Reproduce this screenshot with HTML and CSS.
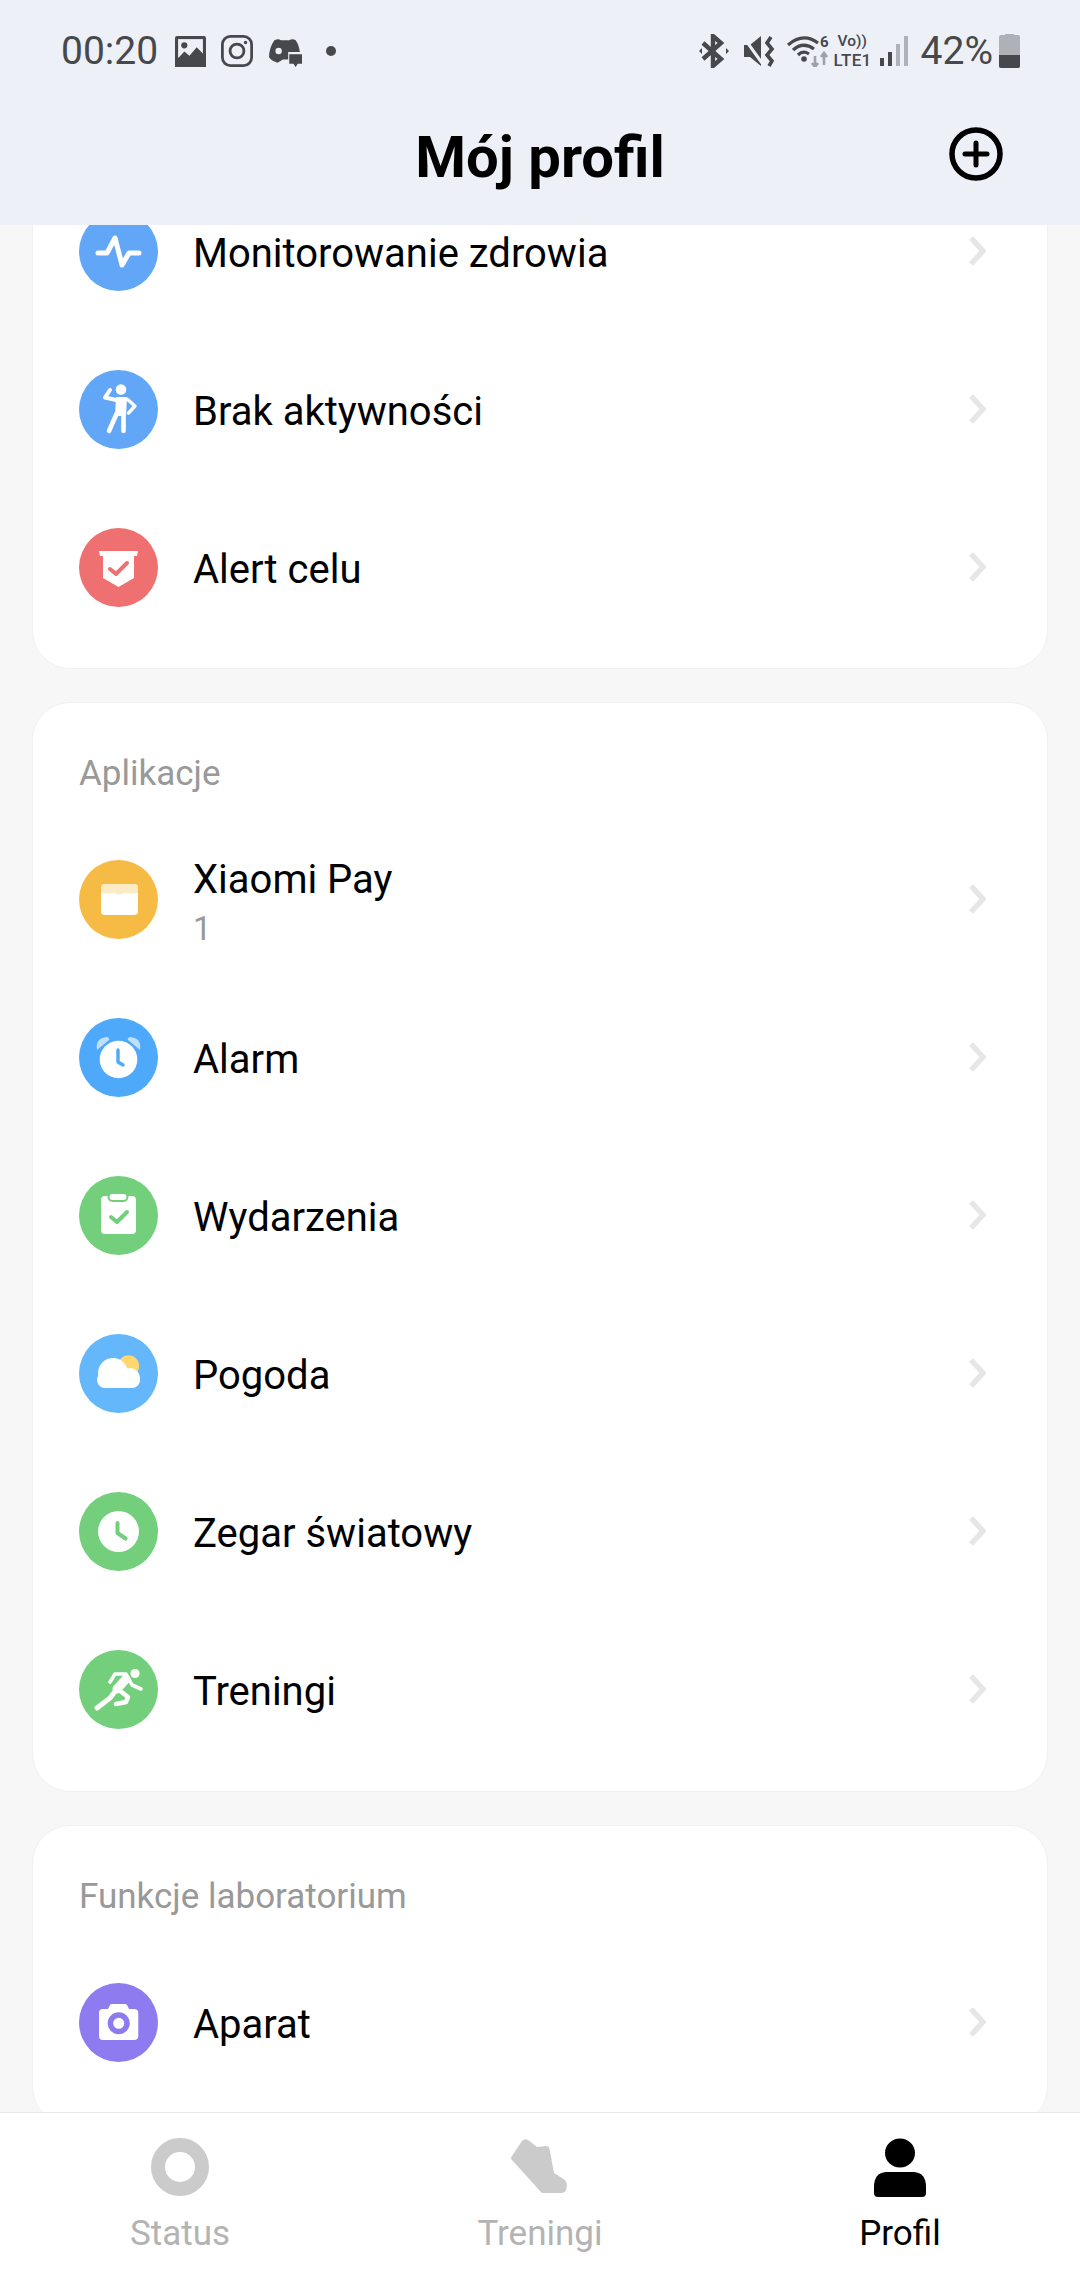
FILE: index.html
```html
<!DOCTYPE html>
<html lang="pl">
<head>
    <meta charset="UTF-8">
    <meta name="viewport" content="width=device-width, initial-scale=1.0">
    <title>Mój profil</title>
    <link rel="stylesheet" href="styles.css">
</head>
<body>
    <header class="top">
        <div class="statusbar">
            <div class="status-left">
                <span class="time">00:20</span>
                <svg class="st-icon" width="31" height="31" viewBox="0 0 30 30"><rect width="30" height="30" rx="2" fill="#46484c"/><rect x="3" y="3" width="24" height="18" fill="#edf0f7"/><circle cx="9" cy="9" r="3" fill="#46484c"/><path d="M0 25 L9 15 L14 19 L21 11 L30 20 V30 H0Z" fill="#46484c"/></svg>
                <svg class="st-icon" width="32" height="32" viewBox="0 0 30 30" fill="none" stroke="#46484c" stroke-width="2.6"><rect x="1.3" y="1.3" width="27.4" height="27.4" rx="7.5"/><circle cx="15" cy="15" r="6.5"/><circle cx="23" cy="7" r="1.6" fill="#46484c" stroke="none"/></svg>
                <svg class="st-icon chat" width="34" height="30" viewBox="0 0 32 28"><path d="M6 3 Q10 1 12 3 H20 Q23 1 26 3 Q29 7 30 14 H19 V21 H14 L9 24 Q4 23 1 19 Q1 10 6 3Z" fill="#46484c"/><circle cx="10" cy="13" r="3" fill="#edf0f7"/><path d="M20 16 H32 V25 H28 L26 28 L24 25 H20Z" fill="#46484c"/></svg>
                <span class="dot"></span>
            </div>
            <div class="status-right">
                <svg class="bt" width="30" height="34" viewBox="0 0 30 34" fill="none" stroke="#46484c" stroke-width="4.4"><path d="M4 9 L22 25 L14 32 V2 L22 9 L4 25"/><path d="M0 17 L3 14 V20Z M30 17 L27 14 V20Z" fill="#46484c" stroke="none"/></svg>
                <svg width="32" height="32" viewBox="0 0 32 32"><path d="M0 10 H6 L17 1 V31 L6 22 H0Z" fill="#46484c"/><path d="M0 3 L18 28" stroke="#edf0f7" stroke-width="3"/><path d="M27 2 L23 8 L28 14 L23 20 L28 26 L25 31" fill="none" stroke="#46484c" stroke-width="3.6"/></svg>
                <div class="wifi">
                    <svg width="42" height="32" viewBox="0 0 42 32" fill="none" stroke="#46484c" stroke-width="3.2"><path d="M1 10 Q16 -3 31 8"/><path d="M6 15 Q16 6 27 14"/><path d="M11 20 Q16 15 22 19"/><circle cx="17" cy="24" r="2.8" fill="#46484c" stroke="none"/><path d="M28 21 V32 M25 28 L28 32 L31 28" stroke="#9ea1a6" stroke-width="2.6"/><path d="M37 30 V18 M34 22 L37 18 L40 22" stroke="#9ea1a6" stroke-width="2.6"/></svg>
                    <span class="wifi-6">6</span>
                </div>
                <div class="volte"><span class="vo">Vo))</span><span class="lte">LTE1</span></div>
                <div class="signal"><i class="b1"></i><i class="b2"></i><i class="b3"></i><i class="b4"></i></div>
                <span class="pct">42%</span>
                <div class="battery"><i class="cap"></i><i class="level"></i></div>
            </div>
        </div>
        <div class="titlebar">
            <h1>Mój profil</h1>
            <svg class="add" width="56" height="56" viewBox="0 0 56 56" fill="none" stroke="#000"><circle cx="28" cy="28" r="24" stroke-width="5.5"/><path d="M28 17 V39 M17 28 H39" stroke-width="5" stroke-linecap="round"/></svg>
        </div>
    </header>

    <main class="scroll">
        <section class="card first">
            <div class="row">
                <svg class="ico" viewBox="0 0 79 79"><circle cx="39.5" cy="39.5" r="39.5" fill="#62a6f7"/><path d="M19 41 H28 L36 26 L43 53 L50 41 H60" fill="none" stroke="#fff" stroke-width="5" stroke-linecap="round" stroke-linejoin="round"/></svg>
                <span class="name">Monitorowanie zdrowia</span>
                <svg class="chev" viewBox="0 0 18 32"><path d="M3 3 L15 16 L3 29" /></svg>
            </div>
            <div class="row">
                <svg class="ico" viewBox="0 0 79 79"><circle cx="39.5" cy="39.5" r="39.5" fill="#62a6f7"/><circle cx="42" cy="19.500" r="5.300" fill="#fff"/><path d="M31 20 L26 27.500 L37 30" fill="none" stroke="#fff" stroke-width="4" stroke-linecap="round" stroke-linejoin="round"/><path d="M48 29 L56 36 L49.500 43" fill="none" stroke="#fff" stroke-width="3.400" stroke-linecap="round" stroke-linejoin="round"/><path d="M37 27 H48 L47 46 H36Z" fill="#fff"/><path d="M37.500 44 L30 61 M44.500 44 V61" fill="none" stroke="#fff" stroke-width="4.600" stroke-linecap="round"/></svg>
                <span class="name">Brak aktywności</span>
                <svg class="chev" viewBox="0 0 18 32"><path d="M3 3 L15 16 L3 29" /></svg>
            </div>
            <div class="row">
                <svg class="ico" viewBox="0 0 79 79"><circle cx="39.5" cy="39.5" r="39.5" fill="#ee7070"/><path d="M20 23 H59 L58 28 H55 V50 L39.5 59 L24 50 V28 H21Z" fill="#fff"/><path d="M31 41 L37 46 L48 35" fill="none" stroke="#ee7070" stroke-width="4" stroke-linecap="round" stroke-linejoin="round"/></svg>
                <span class="name">Alert celu</span>
                <svg class="chev" viewBox="0 0 18 32"><path d="M3 3 L15 16 L3 29" /></svg>
            </div>
        </section>

        <section class="card">
            <h2>Aplikacje</h2>
            <div class="row">
                <svg class="ico" viewBox="0 0 79 79"><circle cx="39.5" cy="39.5" r="39.5" fill="#f6bb45"/><rect x="22" y="24" width="37" height="31" rx="4" fill="#fff"/><path d="M22 33 V28 Q22 24 26 24 H55 Q59 24 59 28 V33 H44 Q40 36 36 33Z" fill="#fdebc6"/></svg>
                <div class="two-lines"><span class="name">Xiaomi Pay</span><span class="sub">1</span></div>
                <svg class="chev" viewBox="0 0 18 32"><path d="M3 3 L15 16 L3 29" /></svg>
            </div>
            <div class="row">
                <svg class="ico" viewBox="0 0 79 79"><circle cx="39.5" cy="39.5" r="39.5" fill="#4ea9fb"/><path d="M18 32 Q16 20 28 19 Q31 20 30 22 Z M61 32 Q63 20 51 19 Q48 20 49 22 Z" fill="#bfe0fc"/><circle cx="39.5" cy="41.5" r="18.8" fill="#fff"/><path d="M39 32 V44 L44 47" fill="none" stroke="#4ea9fb" stroke-width="3.4" stroke-linecap="round" stroke-linejoin="round"/></svg>
                <span class="name">Alarm</span>
                <svg class="chev" viewBox="0 0 18 32"><path d="M3 3 L15 16 L3 29" /></svg>
            </div>
            <div class="row">
                <svg class="ico" viewBox="0 0 79 79"><circle cx="39.5" cy="39.5" r="39.5" fill="#73cf7b"/><rect x="22" y="20" width="35" height="38" rx="4" fill="#fff"/><rect x="29.5" y="17" width="19" height="8" rx="4" fill="#fff" stroke="#73cf7b" stroke-width="2"/><path d="M32 41 L38 46 L48 36" fill="none" stroke="#73cf7b" stroke-width="4" stroke-linecap="round" stroke-linejoin="round"/></svg>
                <span class="name">Wydarzenia</span>
                <svg class="chev" viewBox="0 0 18 32"><path d="M3 3 L15 16 L3 29" /></svg>
            </div>
            <div class="row">
                <svg class="ico" viewBox="0 0 79 79"><circle cx="39.5" cy="39.5" r="39.5" fill="#64b7fb"/><circle cx="49.5" cy="32" r="10.7" fill="#ffd76e"/><circle cx="34" cy="39" r="15" fill="#fff"/><circle cx="51" cy="44" r="10" fill="#fff"/><rect x="18" y="38" width="43" height="16" rx="8" fill="#fff"/></svg>
                <span class="name">Pogoda</span>
                <svg class="chev" viewBox="0 0 18 32"><path d="M3 3 L15 16 L3 29" /></svg>
            </div>
            <div class="row">
                <svg class="ico" viewBox="0 0 79 79"><circle cx="39.5" cy="39.5" r="39.5" fill="#73cf7b"/><circle cx="39.5" cy="39.5" r="20.5" fill="#fff"/><path d="M38.5 31 V41 L46.5 46.5" fill="none" stroke="#73cf7b" stroke-width="4" stroke-linecap="round" stroke-linejoin="round"/></svg>
                <span class="name">Zegar światowy</span>
                <svg class="chev" viewBox="0 0 18 32"><path d="M3 3 L15 16 L3 29" /></svg>
            </div>
            <div class="row">
                <svg class="ico" viewBox="0 0 79 79"><circle cx="39.5" cy="39.5" r="39.5" fill="#73cf7b"/><circle cx="56" cy="23.5" r="4.6" fill="#fff"/><path d="M18 58 L31 48 L38 39" fill="none" stroke="#fff" stroke-width="5" stroke-linecap="round" stroke-linejoin="round"/><path d="M38 39 L47 29" fill="none" stroke="#fff" stroke-width="9" stroke-linecap="round"/><path d="M31 32 L36 24 H47 L53 35 L62 39" fill="none" stroke="#fff" stroke-width="3.6" stroke-linecap="round" stroke-linejoin="round"/><path d="M40 40 L49 47 L47 52 L37 54" fill="none" stroke="#fff" stroke-width="4.6" stroke-linecap="round" stroke-linejoin="round"/></svg>
                <span class="name">Treningi</span>
                <svg class="chev" viewBox="0 0 18 32"><path d="M3 3 L15 16 L3 29" /></svg>
            </div>
        </section>

        <section class="card">
            <h2>Funkcje laboratorium</h2>
            <div class="row">
                <svg class="ico" viewBox="0 0 79 79"><circle cx="39.5" cy="39.5" r="39.5" fill="#8e7bf0"/><path d="M24 26 H29 L31 22 Q31.5 21 33 21 H46 Q47.500 21 48 22 L50 26 H55 Q59.300 26 59.300 30 V53 Q59.300 57 55 57 H24 Q20 57 20 53 V30 Q20 26 24 26Z" fill="#fff"/><circle cx="39.7" cy="40.3" r="8.3" fill="#fff" stroke="#8e7bf0" stroke-width="5.500"/></svg>
                <span class="name">Aparat</span>
                <svg class="chev" viewBox="0 0 18 32"><path d="M3 3 L15 16 L3 29" /></svg>
            </div>
        </section>
    </main>

    <nav class="tabs">
        <div class="tab">
            <svg width="60" height="60" viewBox="0 0 60 60"><circle cx="30" cy="30" r="22" fill="none" stroke="#cbcbcb" stroke-width="14"/></svg>
            <span>Status</span>
        </div>
        <div class="tab">
            <svg width="60" height="60" viewBox="0 0 60 60"><path d="M12 4 Q15 1 18 3 L27 10 L37 9 Q39 9.500 39.500 12 L44 36 L55 43 Q58 47 56 53 Q55 56 51 56 H33 Q31 56 30 54 L2 23 Q0 21 2 19Z" fill="#cbcbcb"/></svg>
            <span>Treningi</span>
        </div>
        <div class="tab active">
            <svg width="60" height="60" viewBox="0 0 60 60"><ellipse cx="30" cy="16" rx="15" ry="14.500" fill="#000"/><path d="M16 35 H44 Q56 36 56 50 V56 Q56 60 52 60 H8 Q4 60 4 56 V50 Q4 36 16 35Z" fill="#000"/></svg>
            <span>Profil</span>
        </div>
    </nav>
</body>
</html>
```

FILE: styles.css
```css
* {
    box-sizing: border-box;
}
html, body {
    margin: 0;
    height: 2280px;
}
body {
    display: flex;
    flex-direction: column;
    font-family: Roboto, sans-serif;
    background-color: #f7f7f7;
    overflow: hidden;
}

/* gorny pasek */
.top {
    flex: 0 0 225px;
    background-color: #edf0f7;
}
.statusbar {
    height: 102px;
    padding: 34px 60px 0 61px;
    display: flex;
    justify-content: space-between;
    align-items: flex-start;
    color: #46484c;
}
.status-left {
    display: flex;
    align-items: center;
    height: 34px;
}
.time {
    font-size: 39px;
    line-height: 34px;
    margin-right: 17px;
}
.st-icon {
    margin-right: 15px;
}
.chat {
    margin-top: 2px;
}
.dot {
    width: 10px;
    height: 10px;
    border-radius: 50%;
    background-color: #46484c;
    margin-left: 9px;
}
.status-right {
    display: flex;
    align-items: center;
    height: 34px;
}
.status-right > svg {
    flex-shrink: 0;
}
.bt {
    margin-right: 15px;
}
.wifi {
    position: relative;
    width: 42px;
    height: 32px;
    margin-left: 11px;
}
.wifi-6 {
    position: absolute;
    top: 0;
    right: 0;
    font-size: 15px;
    line-height: 14px;
    font-weight: 700;
}
.volte {
    display: flex;
    flex-direction: column;
    flex-shrink: 0;
    margin-left: 5px;
    width: 39px;
    font-weight: 500;
}
.vo {
    font-size: 15.5px;
    line-height: 18px;
    padding-left: 4px;
}
.lte {
    font-size: 17px;
    line-height: 20px;
    letter-spacing: 0.3px;
}
.signal {
    display: flex;
    align-items: flex-end;
    gap: 4px;
    height: 30px;
    margin-left: 7px;
}
.signal i {
    display: block;
    width: 4px;
    background-color: #46484c;
}
.signal .b1 { height: 8px; }
.signal .b2 { height: 14px; }
.signal .b3 { height: 22px; background-color: #aeb1b6; }
.signal .b4 { height: 30px; background-color: #aeb1b6; }
.pct {
    font-size: 39px;
    line-height: 34px;
    margin-left: 13px;
    margin-right: 6px;
}
.battery {
    width: 21px;
    height: 33px;
    display: flex;
    flex-direction: column;
    background-color: #aeb1b6;
    border-radius: 2px;
    position: relative;
}
.battery .cap {
    position: absolute;
    top: -1px;
    left: 6px;
    width: 9px;
    height: 5px;
    background-color: #aeb1b6;
}
.battery .level {
    margin-top: auto;
    height: 13px;
    background-color: #46484c;
    border-radius: 0 0 2px 2px;
}

.titlebar {
    display: grid;
    grid-template-columns: 1fr auto 1fr;
    align-items: center;
    height: 110px;
}
h1 {
    grid-column: 2;
    margin: 0;
    font-size: 58px;
    line-height: 110px;
    font-weight: 700;
    color: #000;
}
.add {
    justify-self: end;
    margin-right: 76px;
    margin-bottom: 6px;
}

/* lista */
.scroll {
    flex: 1;
    min-height: 0;
    overflow: hidden;
}
.card {
    margin: 33px 32px 0;
    padding: 0 0 23px;
    background-color: #fff;
    border: 1px solid #f0f0f0;
    border-radius: 38px;
}
.card.first {
    margin-top: -93px;
    padding-top: 39px;
    padding-bottom: 22px;
}
.card h2 {
    margin: 0;
    padding-left: 46px;
    height: 117px;
    padding-top: 51px;
    font-size: 35px;
    line-height: 40px;
    font-weight: 400;
    color: #999;
}
.row {
    height: 158px;
    display: flex;
    align-items: center;
    padding: 0 61px 0 46px;
}
.ico {
    flex: 0 0 79px;
    width: 79px;
    height: 79px;
    margin-right: 35px;
}
.name {
    flex: 1;
    padding-top: 5px;
    font-size: 40px;
    line-height: 48px;
    color: #000;
}
.two-lines {
    flex: 1;
    display: flex;
    flex-direction: column;
    padding-top: 5px;
}
.two-lines .name {
    flex: none;
    padding-top: 0;
}
.sub {
    font-size: 33px;
    line-height: 38px;
    margin-top: 6px;
    color: #999;
}
.chev {
    width: 18px;
    height: 32px;
    flex: none;
    fill: none;
    stroke: #e6e6e6;
    stroke-width: 5.5;
}

/* dolne menu */
.tabs {
    flex: 0 0 168px;
    display: grid;
    grid-template-columns: repeat(3, 1fr);
    background-color: #fff;
    border-top: 1px solid #e8e8e8;
    position: relative;
}
.tab {
    display: flex;
    flex-direction: column;
    align-items: center;
    padding-top: 24px;
    font-size: 35px;
    line-height: 40px;
    color: #b3b3b3;
}
.tab span {
    margin-top: 17px;
}
.tab.active {
    color: #000;
}
```
